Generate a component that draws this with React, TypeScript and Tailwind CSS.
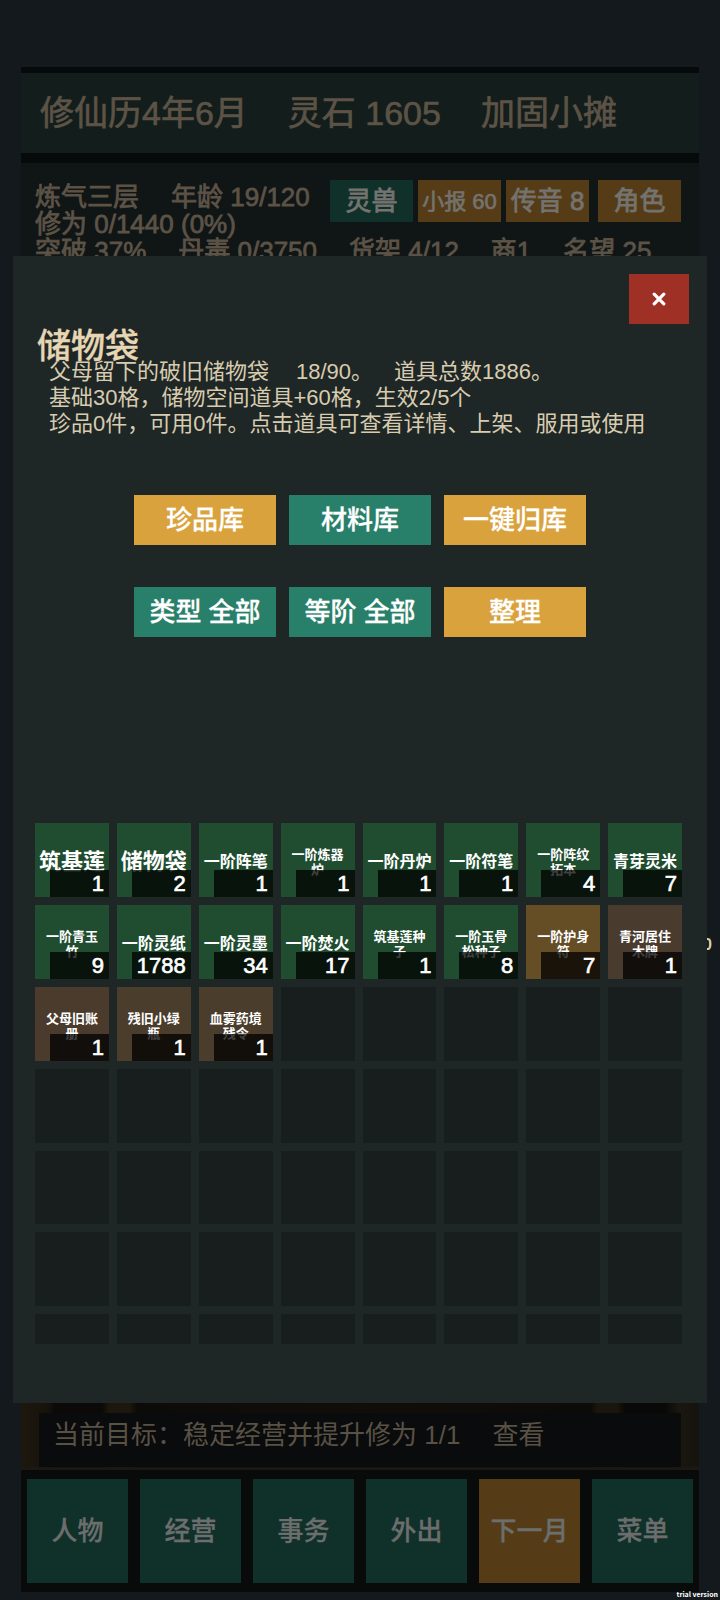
import React from "react";

type Tone = "green" | "amber" | "brown" | "umber" | "olive";
type Size = "lg" | "md" | "sm";
type Item = { name: string; count: number; tone: Tone; size: Size };

const TONES: Record<Tone, string> = {
  green: "bg-[#204c30]",
  amber: "bg-[#654d25]",
  brown: "bg-[#4a3b2c]",
  umber: "bg-[#4a3b2f]",
  olive: "bg-[#4a3d2b]",
};

const SIZES: Record<Size, string> = {
  lg: "text-[22px] leading-6 whitespace-nowrap",
  md: "text-base leading-5 whitespace-nowrap",
  sm: "text-[13px] leading-[15px] break-all",
};

const ITEMS: Item[] = [
  { name: "筑基莲", count: 1, tone: "green", size: "lg" },
  { name: "储物袋", count: 2, tone: "green", size: "lg" },
  { name: "一阶阵笔", count: 1, tone: "green", size: "md" },
  { name: "一阶炼器炉", count: 1, tone: "green", size: "sm" },
  { name: "一阶丹炉", count: 1, tone: "green", size: "md" },
  { name: "一阶符笔", count: 1, tone: "green", size: "md" },
  { name: "一阶阵纹拓本", count: 4, tone: "green", size: "sm" },
  { name: "青芽灵米", count: 7, tone: "green", size: "md" },
  { name: "一阶青玉竹", count: 9, tone: "green", size: "sm" },
  { name: "一阶灵纸", count: 1788, tone: "green", size: "md" },
  { name: "一阶灵墨", count: 34, tone: "green", size: "md" },
  { name: "一阶焚火", count: 17, tone: "green", size: "md" },
  { name: "筑基莲种子", count: 1, tone: "green", size: "sm" },
  { name: "一阶玉骨松种子", count: 8, tone: "green", size: "sm" },
  { name: "一阶护身符", count: 7, tone: "amber", size: "sm" },
  { name: "青河居住木牌", count: 1, tone: "umber", size: "sm" },
  { name: "父母旧账册", count: 1, tone: "brown", size: "sm" },
  { name: "残旧小绿瓶", count: 1, tone: "olive", size: "sm" },
  { name: "血雾药境残令", count: 1, tone: "olive", size: "sm" },
];

const SLOT_COUNT = 56;

function Slot({ item }: { item?: Item }) {
  if (!item) return <li className="aspect-square bg-[#181e1e]" />;
  return (
    <li className="aspect-square">
      <button
        className={`relative flex h-full w-full items-center justify-center px-[5px] pt-1 text-center font-bold text-white ${TONES[item.tone]}`}
      >
        <span className={SIZES[item.size]}>{item.name}</span>
        <span className="absolute right-0 bottom-0 left-[15px] flex h-[27px] items-center justify-end bg-black/75 pr-[5px] text-[22px] font-normal [-webkit-text-stroke:0.03em]">
          {item.count}
        </span>
      </button>
    </li>
  );
}

function ActionButton({ label, primary }: { label: string; primary?: boolean }) {
  return (
    <button
      className={`h-[50px] text-[26px] font-medium whitespace-nowrap text-white [-webkit-text-stroke:0.01em] ${primary ? "bg-[#d9a23d]" : "bg-[#29806a]"}`}
    >
      {label}
    </button>
  );
}

function StatButton({ label, className }: { label: string; className: string }) {
  return (
    <button
      className={`h-[42px] w-[83px] whitespace-nowrap text-[#747370] [-webkit-text-stroke:0.03em] ${className}`}
    >
      {label}
    </button>
  );
}

function Facts({ items }: { items: string[] }) {
  return (
    <p className="flex gap-8">
      {items.map((text) => (
        <span key={text}>{text}</span>
      ))}
    </p>
  );
}

function BagDialog() {
  return (
    <section
      role="dialog"
      aria-labelledby="bag-title"
      className="absolute inset-x-[13px] top-64 bg-[#1f2726] pt-[18px] pb-[59px]"
    >
      <div className="flex justify-end pr-[18px]">
        <button aria-label="关闭" className="flex h-[50px] w-[60px] items-center justify-center bg-[#9e3026]">
          <svg viewBox="0 0 14 14" className="h-3.5 w-3.5" fill="none" stroke="#fff" strokeWidth="3.2" strokeLinecap="round">
            <path d="M2.2 2.2 L11.8 11.8 M11.8 2.2 L2.2 11.8" />
          </svg>
        </button>
      </div>
      <h1
        id="bag-title"
        className="mt-[9px] pl-6 text-[34px] leading-[26px] font-medium text-[#e6d6b4] [-webkit-text-stroke:0.01em]"
      >
        储物袋
      </h1>
      <div className="pl-9 text-[22px] leading-[26px] whitespace-nowrap text-[#d8ccb0]">
        <p className="flex">
          <span className="mr-[27px]">父母留下的破旧储物袋</span>
          <span className="mr-[21px]">18/90。</span>
          <span>道具总数1886。</span>
        </p>
        <p>基础30格，储物空间道具+60格，生效2/5个</p>
        <p>珍品0件，可用0件。点击道具可查看详情、上架、服用或使用</p>
      </div>
      <div className="mx-auto mt-[58px] grid max-w-[452px] grid-cols-3 gap-x-[13px] gap-y-[42px]">
        <ActionButton label="珍品库" primary />
        <ActionButton label="材料库" />
        <ActionButton label="一键归库" primary />
        <ActionButton label="类型 全部" />
        <ActionButton label="等阶 全部" />
        <ActionButton label="整理" primary />
      </div>
      <ul className="mt-[186px] mr-[25px] ml-[22px] grid max-h-[521px] grid-cols-8 gap-2 overflow-hidden">
        {Array.from({ length: SLOT_COUNT }, (_, i) => (
          <Slot key={i} item={ITEMS[i]} />
        ))}
      </ul>
    </section>
  );
}

export default function App() {
  return (
    <div className="relative flex min-h-screen flex-col overflow-hidden bg-[#13191c] px-[21px] pt-[67px] pb-2 font-['Liberation_Sans','Noto_Sans_CJK_SC',sans-serif]">
      <header className="flex gap-10 border-t-[6px] border-b-[10px] border-[#060a0b] bg-[#131d1b] px-[19px] py-5 text-[34px] leading-10 whitespace-nowrap text-[#5c5346] [-webkit-text-stroke:0.02em]">
        <span>修仙历4年6月</span>
        <span>灵石 1605</span>
        <span>加固小摊</span>
      </header>
      <main className="flex flex-1 flex-col bg-[#101516] pt-[17px] text-[26px] leading-[27px] whitespace-nowrap text-[#5c5346] [-webkit-text-stroke:0.03em]">
        <div className="flex justify-between pr-[18px] pl-3.5">
          <div className="pt-1">
            <Facts items={["炼气三层", "年龄 19/120"]} />
            <Facts items={["修为 0/1440 (0%)"]} />
          </div>
          <div className="flex gap-[5px]">
            <StatButton label="灵兽" className="bg-[#10302a] text-[26px]" />
            <StatButton label="小报 60" className="bg-[#553c17] text-[22px]" />
            <StatButton label="传音 8" className="bg-[#553c17] text-[26px]" />
            <StatButton label="角色" className="ml-1 bg-[#553c17] text-[26px]" />
          </div>
        </div>
        <div className="pl-3.5">
          <Facts items={["突破 37%", "丹毒 0/3750", "货架 4/12", "商1", "名望 25"]} />
        </div>
      </main>
      <div className="bg-[linear-gradient(0deg,#1c1813_2px,transparent_4px),linear-gradient(90deg,#1d180e,#17130b_4%,#0b0a08_5%,#0b0a08_12%,#1e170d_13%,#1e170d_16%,#0d0b08_17%,#110e0a_50%,#0d0b08_84%,#1a150d_85%,#1a150d_88%,#0a0908_89%,#0a0908_95%,#1a1710_97%,#15130d)] px-[18px] pt-2.5 pb-[3px]">
        <div className="h-[54px] bg-[#090b0c] pt-1 pl-3.5 text-[26px] leading-9 whitespace-nowrap text-[#5a5145]">
          <Facts items={["当前目标：稳定经营并提升修为 1/1", "查看"]} />
        </div>
      </div>
      <nav className="grid grid-cols-6 gap-3 bg-[#090b0b] px-1.5 py-[9px] text-[26px] font-medium text-[#6b6e6c] [-webkit-text-stroke:0.01em]">
        <button className="h-[104px] bg-[#10302a]">人物</button>
        <button className="h-[104px] bg-[#10302a]">经营</button>
        <button className="h-[104px] bg-[#10302a]">事务</button>
        <button className="h-[104px] bg-[#10302a]">外出</button>
        <button className="h-[104px] bg-[#553c17]">下一月</button>
        <button className="h-[104px] bg-[#10302a]">菜单</button>
      </nav>
      <span className="absolute top-[933px] right-2 text-base leading-6 font-bold text-[#e0d0ae]">0</span>
      <BagDialog />
      <span className="absolute right-0.5 bottom-0 font-['Noto_Sans_CJK_SC',sans-serif] text-[7px] leading-3 font-bold text-white">
        trial version
      </span>
    </div>
  );
}
